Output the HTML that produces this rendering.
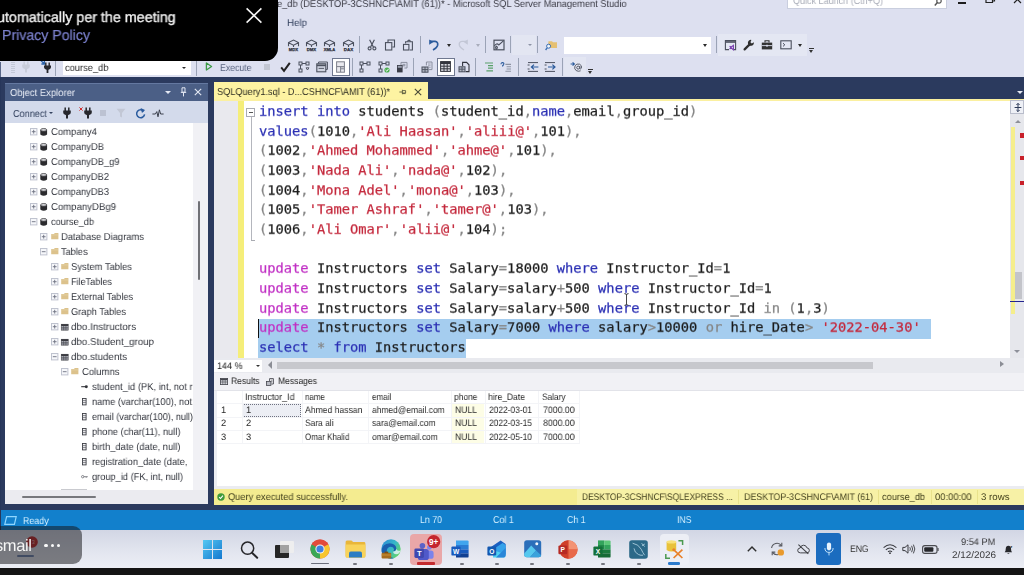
<!DOCTYPE html>
<html>
<head>
<meta charset="utf-8">
<title>SQLQuery1.sql - Microsoft SQL Server Management Studio</title>
<style>
html,body{margin:0;padding:0;}
body{width:1024px;height:575px;overflow:hidden;position:relative;background:#dde0f0;filter:blur(0.45px);font-family:"Liberation Sans",sans-serif;font-size:10px;color:#222;}
.abs{position:absolute;}
.t{position:absolute;white-space:pre;line-height:1.15;transform-origin:0 50%;z-index:5;text-rendering:geometricPrecision;will-change:transform;}
svg{position:absolute;overflow:visible;}
#chrome{left:0;top:0;width:1024px;height:77px;background:#dde0f0;}
#navy{left:0;top:77px;width:1024px;height:433px;background:#2b3a5e;}
#oe{left:5px;top:83px;width:203px;height:421px;background:#fff;}
#oetrack{left:193px;top:123px;width:15px;height:367px;background:#f1f1f5;}
#oehs{left:5px;top:490px;width:203px;height:14px;background:#ebebf0;}
#oehead{left:5px;top:83px;width:203px;height:18px;background:#4b5f86;border-top:1px solid #6478a0;box-sizing:border-box;}
#oetool{left:5px;top:101px;width:203px;height:22px;background:#d3daeb;}
#edtab{left:214px;top:82px;width:214px;height:19px;background:#fdf3a2;}
#editor{left:214px;top:100px;width:810px;height:258px;background:#fff;}
#gutter{left:214px;top:100px;width:24.4px;height:258px;background:#e9e9ee;}
#ybar{left:238.4px;top:100px;width:5.4px;height:258px;background:#f5ee7a;}
.cl{will-change:transform;transform:scaleY(0.94);transform-origin:0 50%;position:absolute;left:258.5px;white-space:pre;font-family:"DejaVu Sans Mono","Liberation Mono",monospace;font-size:13.74px;letter-spacing:0px;line-height:20px;height:20px;color:#1c1c1c;z-index:5;-webkit-text-stroke:0.25px;}
.kw{color:#2b30b4;}
.str{color:#c4283c;}
.gr{color:#858585;}
.mg{color:#c030c4;}
.sel{position:absolute;background:#a5cdef;}
#zoombar{left:214px;top:358px;width:810px;height:15px;background:#e9eaef;}
#restabs{left:214px;top:373px;width:810px;height:17px;background:#f1f1f5;}
#grid{left:214px;top:390px;width:810px;height:95.5px;background:#fff;}
#gridgap{left:214px;top:485.5px;width:810px;height:3.5px;background:#ebecf1;}
#qstat{left:214px;top:489px;width:810px;height:15.7px;background:#f7f1a6;}
#qstatl{left:214px;top:489px;width:362.5px;height:15.7px;background:#f4ec90;}
#blue{left:0;top:510px;width:1024px;height:20px;background:#1280cc;}
#taskbar{left:0;top:529.8px;width:1024px;height:38.4px;background:linear-gradient(#d2d6e4,#e2e5ef 55%,#eceef5);}
#bottom{left:0;top:568px;width:1024px;height:7px;background:#141414;}
#toast{left:0;top:0;width:278px;height:61px;background:#000;border-radius:0 0 13px 0;z-index:10;}
.sep{position:absolute;width:1px;background:#9aa3b8;}
</style>
</head>
<body>
<div class="abs" id="chrome"></div>
<div class="abs" id="navy"></div>
<!-- OBJECT EXPLORER -->
<div class="abs" id="oe"></div>
<div class="abs" id="oetrack"></div>
<div class="abs" id="oehs"></div>
<div class="abs" id="oehead"></div>
<div class="abs" id="oetool"></div>
<!-- EDITOR -->
<div class="abs" id="edtab"></div>
<div class="abs" id="editor"></div>
<div class="abs" id="gutter"></div>
<div class="abs" id="ybar"></div>
<!-- RESULTS -->
<div class="abs" id="zoombar"></div>
<div class="abs" id="restabs"></div>
<div class="abs" id="grid"></div>
<div class="abs" id="gridgap"></div>
<div class="abs" id="qstat"></div>
<div class="abs" id="qstatl"></div>
<!-- STATUS / TASKBAR -->
<div class="abs" id="blue"></div>
<div class="abs" id="taskbar"></div>
<div class="abs" id="bottom"></div>
<!-- TOAST -->
<div class="abs" id="toast"></div>

<!-- TOP CHROME / TOOLBARS -->
<div class="abs" style="left:0;top:62px;width:1px;height:16px;background:#5a6788"></div>
<div class="abs" style="left:787px;top:0;width:160px;height:9px;background:#fff;border:1px solid #c9cede;border-top:none;box-sizing:border-box"></div>
<svg style="left:934.0px;top:-2.0px" width="8" height="8" viewBox="0 0 8 8"><circle cx="5" cy="3" r="2.2" fill="none" stroke="#555" stroke-width="1.2"/><path d="M3.4 4.6 L0.8 7.4" stroke="#555" stroke-width="1.5"/></svg>
<div class="abs" style="left:958px;top:1.5px;width:8px;height:2px;background:#1d1d1d"></div>
<svg style="left:985.0px;top:-2.0px" width="10" height="8" viewBox="0 0 10 8"><path d="M1 -2 V4.5 H7.5 V-2 M3 -3 H9.5 V3 H7.5" fill="none" stroke="#222" stroke-width="1.2"/></svg>
<svg style="left:1013.5px;top:-2.0px" width="9" height="7" viewBox="0 0 9 7"><path d="M0 -2 L7 5 M7 -2 L3.5 1.5 L0 5" fill="none" stroke="#222" stroke-width="1.2"/></svg>
<svg style="left:245.5px;top:8px;z-index:11" width="16" height="15" viewBox="0 0 16 15"><path d="M0.6 0.4 L15.4 14.6 M15.4 0.4 L0.6 14.6" stroke="#f4f4f4" stroke-width="1.6"/></svg>
<svg style="left:286.5px;top:38.5px" width="13" height="12" viewBox="0 0 13 12"><path d="M1.5 7.2 V3.6 L6.5 1 L11.5 3.6 V7.2 M1.5 3.8 L6.5 6.2 L11.5 3.8 M6.5 6.2 V8" fill="none" stroke="#4b505e" stroke-width="1.1"/><text x="6.5" y="12" font-family="Liberation Sans,sans-serif" font-size="4.3" font-weight="bold" text-anchor="middle" fill="#2e3140" stroke="#2e3140" stroke-width="0.25" textLength="9.4" lengthAdjust="spacingAndGlyphs">MDX</text></svg>
<svg style="left:305.0px;top:38.5px" width="13" height="12" viewBox="0 0 13 12"><path d="M1.5 7.2 V3.6 L6.5 1 L11.5 3.6 V7.2 M1.5 3.8 L6.5 6.2 L11.5 3.8 M6.5 6.2 V8" fill="none" stroke="#4b505e" stroke-width="1.1"/><text x="6.5" y="12" font-family="Liberation Sans,sans-serif" font-size="4.3" font-weight="bold" text-anchor="middle" fill="#2e3140" stroke="#2e3140" stroke-width="0.25" textLength="9.4" lengthAdjust="spacingAndGlyphs">DMX</text></svg>
<svg style="left:323.3px;top:38.5px" width="13" height="12" viewBox="0 0 13 12"><path d="M1.5 7.2 V3.6 L6.5 1 L11.5 3.6 V7.2 M1.5 3.8 L6.5 6.2 L11.5 3.8 M6.5 6.2 V8" fill="none" stroke="#4b505e" stroke-width="1.1"/><text x="6.5" y="12" font-family="Liberation Sans,sans-serif" font-size="4.3" font-weight="bold" text-anchor="middle" fill="#2e3140" stroke="#2e3140" stroke-width="0.25" textLength="11.6" lengthAdjust="spacingAndGlyphs">XMLA</text></svg>
<svg style="left:341.5px;top:38.5px" width="13" height="12" viewBox="0 0 13 12"><path d="M1.5 7.2 V3.6 L6.5 1 L11.5 3.6 V7.2 M1.5 3.8 L6.5 6.2 L11.5 3.8 M6.5 6.2 V8" fill="none" stroke="#4b505e" stroke-width="1.1"/><text x="6.5" y="12" font-family="Liberation Sans,sans-serif" font-size="4.3" font-weight="bold" text-anchor="middle" fill="#2e3140" stroke="#2e3140" stroke-width="0.25" textLength="9.4" lengthAdjust="spacingAndGlyphs">DAX</text></svg>
<div class="sep" style="left:358.5px;top:36.0px;height:17.0px;background:#9ba3b6"></div>
<svg style="left:366.0px;top:38.5px" width="12" height="12" viewBox="0 0 12 12"><path d="M3.6 0.8 L7.4 8 M8.4 0.8 L4.6 8" stroke="#4b505e" stroke-width="1.2" fill="none"/><circle cx="3.6" cy="9.4" r="1.5" fill="none" stroke="#4b505e" stroke-width="1.1"/><circle cx="8.4" cy="9.4" r="1.5" fill="none" stroke="#4b505e" stroke-width="1.1"/></svg>
<svg style="left:384.3px;top:38.5px" width="12" height="12" viewBox="0 0 12 12"><path d="M4 3 V1 H10.5 V8 H8.4" fill="none" stroke="#4b505e" stroke-width="1.1"/><rect x="1.5" y="3.6" width="6.3" height="7.4" fill="none" stroke="#4b505e" stroke-width="1.1"/></svg>
<svg style="left:402.0px;top:38.5px" width="12" height="12" viewBox="0 0 12 12"><path d="M3.6 4.4 V2.8 H10.4 V11 H7.8" fill="none" stroke="#4b505e" stroke-width="1.1"/><path d="M5.4 2.6 Q7 -0.4 8.6 2.6" fill="none" stroke="#4b505e" stroke-width="1.1"/><rect x="1.5" y="5.4" width="5.4" height="5.6" fill="none" stroke="#4b505e" stroke-width="1.1"/></svg>
<div class="sep" style="left:420.1px;top:36.0px;height:17.0px;background:#9ba3b6"></div>
<svg style="left:428.0px;top:38.5px" width="12" height="12" viewBox="0 0 12 12"><path d="M2.2 2.4 H7 Q10.4 2.8 9.6 6.4 Q9 8.8 5 11" fill="none" stroke="#2b5b9c" stroke-width="1.7"/><path d="M1.2 0.6 V5.8 L5.4 3 Z" fill="#2b5b9c"/></svg>
<div class="abs" style="left:446.7px;top:43.5px;border:2.4px solid transparent;border-top:3px solid #2a2a2a;border-bottom:none"></div>
<svg style="left:457.0px;top:38.5px" width="12" height="12" viewBox="0 0 12 12"><path d="M9.8 2.4 H5 Q1.6 2.8 2.4 6.4 Q3 8.8 7 11" fill="none" stroke="#c3c7d6" stroke-width="1.4"/><path d="M10.8 0.6 V5.8 L6.6 3 Z" fill="#c3c7d6"/></svg>
<div class="abs" style="left:475.6px;top:43.5px;border:2.4px solid transparent;border-top:3px solid #a9adbc;border-bottom:none"></div>
<div class="sep" style="left:485.1px;top:36.0px;height:17.0px;background:#9ba3b6"></div>
<svg style="left:493.0px;top:38.5px" width="12" height="12" viewBox="0 0 12 12"><rect x="1" y="1.2" width="10" height="9.6" fill="none" stroke="#4b505e" stroke-width="1.2"/><path d="M1.4 7 Q3.6 3.4 5.8 6 L10.4 1.8 M3.4 10.4 Q1.8 8.4 3.4 7.2 Q5.4 8.2 3.4 10.4" fill="none" stroke="#4b505e" stroke-width="1.1"/></svg>
<div class="sep" style="left:510.2px;top:36.0px;height:17.0px;background:#9ba3b6"></div>
<div class="abs" style="left:512px;top:35px;width:24px;height:20px;background:#e3e6f2"></div>
<div class="abs" style="left:527.6px;top:43.5px;border:2.2px solid transparent;border-top:2.6px solid #8d93a6;border-bottom:none"></div>
<div class="sep" style="left:537.0px;top:36.0px;height:17.0px;background:#9ba3b6"></div>
<svg style="left:544.5px;top:38.5px" width="13" height="12" viewBox="0 0 13 12"><path d="M3.4 2.2 H7 L8 3.2 H12 V9 H3.4 Z" fill="#e5c073"/><circle cx="3.6" cy="7.2" r="2" fill="#eef3fb" stroke="#3a6fb4" stroke-width="1"/><path d="M2.2 8.8 L0.6 11" stroke="#3a6fb4" stroke-width="1.3"/></svg>
<div class="abs" style="left:564px;top:37px;width:147px;height:17px;background:#fff"></div>
<div class="abs" style="left:703px;top:44px;border:2.4px solid transparent;border-top:3px solid #2a2a2a;border-bottom:none"></div>
<div class="sep" style="left:715.5px;top:36.0px;height:17.0px;background:#9ba3b6"></div>
<div class="abs" style="left:718px;top:33.5px;width:89px;height:22px;background:#e4e7f3"></div>
<svg style="left:723.5px;top:38.5px" width="13" height="12" viewBox="0 0 13 12"><path d="M5 10.6 H1.4 V1.6 H11.6 V10.6 H10" fill="none" stroke="#4b505e" stroke-width="1.1"/><path d="M1.4 3 H11.6" stroke="#4b505e" stroke-width="1.6"/><path d="M5.6 7.2 L7.2 8.6 L5.6 10 M9.4 6.4 V10.8 L6.6 8.6 Z" fill="none" stroke="#7a3fb0" stroke-width="1.1"/></svg>
<svg style="left:742.5px;top:38.5px" width="12" height="12" viewBox="0 0 12 12"><path d="M1.6 10.4 L6.4 5.6" stroke="#2e2e2e" stroke-width="2.2" stroke-linecap="round"/><path d="M10.8 3.2 A3 3 0 1 1 8.4 0.9 L7.4 3.2 L8.8 4.4 Z" fill="#2e2e2e"/></svg>
<svg style="left:761.0px;top:38.5px" width="12" height="12" viewBox="0 0 12 12"><rect x="0.8" y="3.6" width="10.4" height="6.8" fill="#333"/><path d="M4 3.4 V1.8 H8 V3.4" fill="none" stroke="#333" stroke-width="1.1"/><path d="M0.8 6.6 H11.2" stroke="#dde0f0" stroke-width="0.9"/><rect x="5.2" y="5.8" width="1.6" height="1.8" fill="#dde0f0"/></svg>
<svg style="left:780.0px;top:39.5px" width="12" height="10" viewBox="0 0 12 10"><rect x="0.8" y="0.8" width="10.4" height="8" fill="none" stroke="#4b505e" stroke-width="1.1"/><path d="M3 3.2 L4.8 4.8 L3 6.4" fill="none" stroke="#4b505e" stroke-width="1"/></svg>
<div class="abs" style="left:797.6px;top:43.5px;border:2.4px solid transparent;border-top:3px solid #2a2a2a;border-bottom:none"></div>
<div class="abs" style="left:809px;top:48px;width:5px;height:1px;background:#333"></div>
<div class="abs" style="left:809px;top:50px;border:2.5px solid transparent;border-top:3px solid #333;border-bottom:none"></div>
<div class="abs" style="left:11px;top:61px;width:4px;height:13px;background:repeating-linear-gradient(#dde0f0 0 1px,#c4c9d8 1px 2px)"></div>
<svg style="left:21.0px;top:60.5px" width="10" height="12" viewBox="0 0 10 12"><path d="M3.2 0.4 V4 M6.8 0.4 V4" stroke="#c9cdda" stroke-width="1.5"/><path d="M1.2 3.4 H8.8 V5.4 Q8.8 7.2 6.8 7.8 L6 8.2 V11.6 H4 V8.2 L3.2 7.8 Q1.2 7.2 1.2 5.4 Z" fill="#c9cdda"/></svg>
<svg style="left:39.5px;top:60.0px" width="12" height="13" viewBox="0 0 12 13"><path d="M5.8 2.6 V6 M9.2 2.6 V6" stroke="#26272c" stroke-width="1.4"/><path d="M4 5.4 H11 V7.2 Q11 8.8 9.2 9.4 L8.4 9.8 V13 H6.6 V9.8 L5.8 9.4 Q4 8.8 4 7.2 Z" fill="#26272c"/><path d="M0.6 0.4 L4.2 3.8 M4.4 0.8 V4 H1.4" fill="none" stroke="#2b62a8" stroke-width="1.3"/></svg>
<div class="sep" style="left:55.2px;top:60.0px;height:16.0px;background:#9ba3b6"></div>
<div class="abs" style="left:63px;top:61px;width:127.5px;height:13.5px;background:#fff"></div>
<div class="abs" style="left:182.4px;top:66.5px;border:2.2px solid transparent;border-top:2.8px solid #2a2a2a;border-bottom:none"></div>
<div class="sep" style="left:195.7px;top:60.0px;height:16.0px;background:#9ba3b6"></div>
<svg style="left:204.8px;top:62.3px" width="8" height="9" viewBox="0 0 8 9"><path d="M1.4 1 L6.6 4.5 L1.4 8 Z" fill="none" stroke="#3d9a46" stroke-width="1.3" stroke-linejoin="round"/></svg>
<div class="abs" style="left:264.4px;top:63.8px;width:6px;height:6px;background:#c2c6d2"></div>
<svg style="left:279.8px;top:62.3px" width="11" height="10" viewBox="0 0 11 10"><path d="M1.2 5.4 L4 8.8 L9.8 0.8" fill="none" stroke="#222" stroke-width="2"/></svg>
<svg style="left:297.8px;top:60.5px" width="12" height="12" viewBox="0 0 12 12"><rect x="1" y="1" width="3" height="3" fill="none" stroke="#4b505e" stroke-width="1"/><rect x="1" y="8" width="3" height="3" fill="none" stroke="#4b505e" stroke-width="1"/><rect x="8" y="1" width="3" height="3" fill="none" stroke="#4b505e" stroke-width="1"/><path d="M2.5 4 V8 M4 2.5 H8" stroke="#4b505e" stroke-width="1"/><path d="M8 6.8 H11 L9.5 9 Z" fill="none" stroke="#4b505e" stroke-width="0.9"/></svg>
<svg style="left:316.0px;top:60.5px" width="12" height="12" viewBox="0 0 12 12"><path d="M2.6 2.6 V1 H11.4 V8.4 H9.8" fill="none" stroke="#4b505e" stroke-width="1"/><rect x="0.8" y="2.8" width="9" height="8" fill="#cfd3e0" stroke="#4b505e" stroke-width="1.1"/><path d="M0.8 4.4 H9.8" stroke="#4b505e" stroke-width="1.6"/><path d="M2.6 7.4 H8" stroke="#4b505e" stroke-width="0.9"/></svg>
<div class="abs" style="left:331.5px;top:57.5px;width:18px;height:18px;background:#fff;border:1px solid #6f7890;box-sizing:border-box"></div>
<svg style="left:336.0px;top:60.5px" width="9" height="12" viewBox="0 0 9 12"><rect x="0.6" y="0.8" width="7.8" height="10.4" fill="#e9e9ee" stroke="#7c7f8a" stroke-width="1"/><path d="M0.6 5.6 H8.4 M4.6 5.6 V11" stroke="#7c7f8a" stroke-width="1"/><rect x="5" y="6.6" width="3" height="1.8" fill="#9a9da8"/></svg>
<div class="sep" style="left:351.8px;top:58.0px;height:18.0px;background:#9ba3b6"></div>
<svg style="left:359.4px;top:60.5px" width="12" height="12" viewBox="0 0 12 12"><rect x="1" y="1" width="3" height="3" fill="none" stroke="#4b505e" stroke-width="1"/><rect x="1" y="8" width="3" height="3" fill="none" stroke="#4b505e" stroke-width="1"/><rect x="8" y="1" width="3" height="3" fill="none" stroke="#4b505e" stroke-width="1"/><path d="M2.5 4 V8 M4 2.5 H8" stroke="#4b505e" stroke-width="1"/></svg>
<svg style="left:377.5px;top:60.5px" width="12" height="12" viewBox="0 0 12 12"><rect x="1" y="1" width="3" height="3" fill="none" stroke="#4b505e" stroke-width="1"/><rect x="1" y="8" width="3" height="3" fill="none" stroke="#4b505e" stroke-width="1"/><rect x="8" y="1" width="3" height="3" fill="none" stroke="#4b505e" stroke-width="1"/><path d="M2.5 4 V8 M4 2.5 H8" stroke="#4b505e" stroke-width="1"/><circle cx="9" cy="9" r="2.6" fill="#4caf50"/><path d="M7.6 9 L8.8 10.2 L10.6 7.8" fill="none" stroke="#fff" stroke-width="0.9"/></svg>
<svg style="left:395.5px;top:60.5px" width="12" height="12" viewBox="0 0 12 12"><path d="M5 4 V1.4 H11 V7 H8.4" fill="none" stroke="#8a8f9e" stroke-width="1"/><rect x="6.4" y="2.8" width="3" height="2.6" fill="#9a9fae"/><rect x="1" y="4" width="5.6" height="7.4" fill="#3a3d48"/><rect x="1.8" y="4.8" width="4" height="2" fill="#9a9fae"/></svg>
<div class="sep" style="left:413.0px;top:58.0px;height:18.0px;background:#9ba3b6"></div>
<svg style="left:421.0px;top:60.5px" width="12" height="12" viewBox="0 0 12 12"><path d="M5.4 4.4 V1 H11 V8.6 H7.8" fill="none" stroke="#8a8f9e" stroke-width="1"/><path d="M7 3 H9.6 M7 4.8 H9.6 M8.2 6.6 H9.6" stroke="#8a8f9e" stroke-width="0.8"/><rect x="1" y="6" width="6" height="5.2" fill="#b4b8c6" stroke="#4b505e" stroke-width="1"/><path d="M1 8.6 H7 M4 6 V11.2" stroke="#4b505e" stroke-width="0.9"/></svg>
<div class="abs" style="left:436.5px;top:57.5px;width:18px;height:18px;background:#fff;border:1px solid #6f7890;box-sizing:border-box"></div>
<svg style="left:440.0px;top:61.0px" width="11" height="11" viewBox="0 0 11 11"><rect x="0.6" y="0.6" width="9.8" height="9.8" fill="#d8d9df" stroke="#33353e" stroke-width="1"/><path d="M0.6 1.8 H10.4" stroke="#33353e" stroke-width="2.4"/><path d="M0.6 5.2 H10.4 M0.6 7.8 H10.4 M4 3 V10.4 M7.2 3 V10.4" stroke="#33353e" stroke-width="1"/></svg>
<svg style="left:458.0px;top:60.5px" width="12" height="12" viewBox="0 0 12 12"><path d="M4.6 5 V1.4 H8.6 L11 3.8 V10.6 H7.6" fill="none" stroke="#33353e" stroke-width="1.1"/><rect x="1" y="5.8" width="6" height="5" fill="#b4b8c6" stroke="#4b505e" stroke-width="1"/><path d="M1 8.2 H7 M4 5.8 V10.8" stroke="#4b505e" stroke-width="0.9"/></svg>
<div class="sep" style="left:475.1px;top:58.0px;height:18.0px;background:#9ba3b6"></div>
<svg style="left:484.0px;top:61.5px" width="10" height="10" viewBox="0 0 10 10"><path d="M1 1 H9 M4 3.6 H9 M4 6.2 H9 M2.4 8.8 H9" stroke="#5aa06a" stroke-width="1.2"/></svg>
<svg style="left:500.0px;top:61.5px" width="12" height="10" viewBox="0 0 12 10"><path d="M1 2.2 Q1.2 0.4 2.8 0.6 Q4.4 1 3.6 2.6 L2.6 3.8 V4.6" fill="none" stroke="#2b5b9c" stroke-width="1.1"/><path d="M5.4 2.4 H11 M6.6 4.8 H11 M6.6 7 H11 M5.4 9.2 H11" stroke="#8d92a2" stroke-width="1.1"/></svg>
<div class="sep" style="left:518.2px;top:58.0px;height:18.0px;background:#9ba3b6"></div>
<svg style="left:526.5px;top:61.5px" width="12" height="10" viewBox="0 0 12 10"><path d="M1 0.6 H11 M1 9.4 H11" stroke="#4b505e" stroke-width="1"/><path d="M0.6 3 H2.6 M0.6 7 H2.6" stroke="#4b505e" stroke-width="1"/><path d="M11.4 5 H4.6 M7 2.6 L4.4 5 L7 7.4" fill="none" stroke="#2b5b9c" stroke-width="1.2"/></svg>
<svg style="left:544.0px;top:61.5px" width="12" height="10" viewBox="0 0 12 10"><path d="M1 0.6 H11 M1 9.4 H11" stroke="#4b505e" stroke-width="1"/><path d="M0.6 3 H2.6 M0.6 7 H2.6" stroke="#4b505e" stroke-width="1"/><path d="M4 5 H10.8 M8.4 2.6 L11 5 L8.4 7.4" fill="none" stroke="#2b5b9c" stroke-width="1.2"/></svg>
<div class="sep" style="left:562.0px;top:58.0px;height:18.0px;background:#9ba3b6"></div>
<div class="abs" style="left:564px;top:57px;width:22px;height:19px;background:#e3e6f2"></div>
<svg style="left:569.5px;top:61.5px" width="13" height="10" viewBox="0 0 13 10"><path d="M0.6 2 H4 M2.6 0.4 L4.4 2 L2.6 3.6" fill="none" stroke="#2b5b9c" stroke-width="1.1"/><circle cx="8.2" cy="5.6" r="1.5" fill="none" stroke="#4b505e" stroke-width="0.9"/><path d="M9.8 4 V6.6 Q10.6 7.4 11.4 6.2 Q12.2 3.4 9.6 2.2 Q6.6 1.2 5 3.8 Q3.8 6.8 6.2 8.6 Q8.4 9.8 10.6 8.8" fill="none" stroke="#4b505e" stroke-width="0.9"/></svg>
<div class="abs" style="left:588px;top:68.5px;width:5px;height:1px;background:#333"></div>
<div class="abs" style="left:588px;top:70.5px;border:2.5px solid transparent;border-top:3px solid #333;border-bottom:none"></div>

<!-- OBJECT EXPLORER DETAILS -->
<div class="abs" style="left:165px;top:90.5px;border:3px solid transparent;border-top:3.4px solid #e3e8f3;border-bottom:none"></div>
<svg style="left:179.9px;top:87.0px" width="7" height="10" viewBox="0 0 7 10"><path d="M2 0.8 H5 V5.2 H2 Z M0.8 5.4 H6.2 M3.5 5.4 V9.4" fill="none" stroke="#e3e8f3" stroke-width="1"/></svg>
<svg style="left:193.6px;top:88.0px" width="8" height="8" viewBox="0 0 8 8"><path d="M0.8 0.8 L7.2 7.2 M7.2 0.8 L0.8 7.2" stroke="#e3e8f3" stroke-width="1.1"/></svg>
<div class="abs" style="left:48.6px;top:112px;border:2.2px solid transparent;border-top:2.8px solid #34425f;border-bottom:none"></div>
<svg style="left:62.0px;top:106.5px" width="10" height="12" viewBox="0 0 10 12"><path d="M3.2 0.4 V4 M6.8 0.4 V4" stroke="#26272c" stroke-width="1.5"/><path d="M1.2 3.4 H8.8 V5.4 Q8.8 7.2 6.8 7.8 L6 8.2 V11.6 H4 V8.2 L3.2 7.8 Q1.2 7.2 1.2 5.4 Z" fill="#26272c"/></svg>
<svg style="left:82.5px;top:106.5px" width="10" height="12" viewBox="0 0 10 12"><path d="M3.2 0.4 V4 M6.8 0.4 V4" stroke="#26272c" stroke-width="1.5"/><path d="M1.2 3.4 H8.8 V5.4 Q8.8 7.2 6.8 7.8 L6 8.2 V11.6 H4 V8.2 L3.2 7.8 Q1.2 7.2 1.2 5.4 Z" fill="#26272c"/></svg>
<svg style="left:79.0px;top:106.5px" width="4" height="4" viewBox="0 0 4 4"><path d="M0.4 0.4 L3.6 3.6 M3.6 0.4 L0.4 3.6" stroke="#d03030" stroke-width="1"/></svg>
<div class="abs" style="left:100px;top:109.5px;width:6px;height:6px;background:#bcc2d2"></div>
<svg style="left:116.0px;top:108.0px" width="10" height="10" viewBox="0 0 10 10"><path d="M0.6 0.8 H9.4 L6 5 V9.6 L4 8.4 V5 Z" fill="#c2c7d5"/></svg>
<svg style="left:134.5px;top:107.5px" width="11" height="11" viewBox="0 0 11 11"><path d="M8.8 3.2 A4 4 0 1 0 9.6 6.4" fill="none" stroke="#2a5b9e" stroke-width="1.5"/><path d="M5.6 0 L10 2 L7 5 Z" fill="#2a5b9e"/></svg>
<svg style="left:152.4px;top:108.5px" width="12" height="9" viewBox="0 0 12 9"><path d="M0.4 5 H3.4 L4.8 2.6 L6 7.8 L7.4 0.8 L8.6 5 H11.6" fill="none" stroke="#3a3f4c" stroke-width="1"/></svg>
<div class="abs" style="left:198.2px;top:201px;width:2.2px;height:78.5px;background:#707176;border-radius:1px"></div>
<div class="abs" style="left:22px;top:495.6px;width:74px;height:2.2px;background:#77787d;border-radius:1px"></div>
<svg style="left:30.2px;top:128.3px" width="7.4" height="7.4" viewBox="0 0 7.4 7.4"><rect x="0.5" y="0.5" width="6.4" height="6.4" fill="#f6f7fa" stroke="#bfc3cf" stroke-width="1"/><path d="M1.8 3.7 H5.6" stroke="#6d7180" stroke-width="0.9"/><path d="M3.7 1.8 V5.6" stroke="#6d7180" stroke-width="0.9"/></svg>
<svg style="left:40.1px;top:128.1px" width="7.4" height="8.2" viewBox="0 0 7.4 8.2"><path d="M0.3 1.9 V6.4 Q3.7 9 7.1 6.4 V1.9 Z" fill="#2b2b2e"/><ellipse cx="3.7" cy="1.9" rx="3.1" ry="1.4" fill="#d4d4d8" stroke="#2b2b2e" stroke-width="0.7"/></svg>
<svg style="left:30.2px;top:143.3px" width="7.4" height="7.4" viewBox="0 0 7.4 7.4"><rect x="0.5" y="0.5" width="6.4" height="6.4" fill="#f6f7fa" stroke="#bfc3cf" stroke-width="1"/><path d="M1.8 3.7 H5.6" stroke="#6d7180" stroke-width="0.9"/><path d="M3.7 1.8 V5.6" stroke="#6d7180" stroke-width="0.9"/></svg>
<svg style="left:40.1px;top:143.1px" width="7.4" height="8.2" viewBox="0 0 7.4 8.2"><path d="M0.3 1.9 V6.4 Q3.7 9 7.1 6.4 V1.9 Z" fill="#2b2b2e"/><ellipse cx="3.7" cy="1.9" rx="3.1" ry="1.4" fill="#d4d4d8" stroke="#2b2b2e" stroke-width="0.7"/></svg>
<svg style="left:30.2px;top:158.3px" width="7.4" height="7.4" viewBox="0 0 7.4 7.4"><rect x="0.5" y="0.5" width="6.4" height="6.4" fill="#f6f7fa" stroke="#bfc3cf" stroke-width="1"/><path d="M1.8 3.7 H5.6" stroke="#6d7180" stroke-width="0.9"/><path d="M3.7 1.8 V5.6" stroke="#6d7180" stroke-width="0.9"/></svg>
<svg style="left:40.1px;top:158.1px" width="7.4" height="8.2" viewBox="0 0 7.4 8.2"><path d="M0.3 1.9 V6.4 Q3.7 9 7.1 6.4 V1.9 Z" fill="#2b2b2e"/><ellipse cx="3.7" cy="1.9" rx="3.1" ry="1.4" fill="#d4d4d8" stroke="#2b2b2e" stroke-width="0.7"/></svg>
<svg style="left:30.2px;top:173.3px" width="7.4" height="7.4" viewBox="0 0 7.4 7.4"><rect x="0.5" y="0.5" width="6.4" height="6.4" fill="#f6f7fa" stroke="#bfc3cf" stroke-width="1"/><path d="M1.8 3.7 H5.6" stroke="#6d7180" stroke-width="0.9"/><path d="M3.7 1.8 V5.6" stroke="#6d7180" stroke-width="0.9"/></svg>
<svg style="left:40.1px;top:173.1px" width="7.4" height="8.2" viewBox="0 0 7.4 8.2"><path d="M0.3 1.9 V6.4 Q3.7 9 7.1 6.4 V1.9 Z" fill="#2b2b2e"/><ellipse cx="3.7" cy="1.9" rx="3.1" ry="1.4" fill="#d4d4d8" stroke="#2b2b2e" stroke-width="0.7"/></svg>
<svg style="left:30.2px;top:188.3px" width="7.4" height="7.4" viewBox="0 0 7.4 7.4"><rect x="0.5" y="0.5" width="6.4" height="6.4" fill="#f6f7fa" stroke="#bfc3cf" stroke-width="1"/><path d="M1.8 3.7 H5.6" stroke="#6d7180" stroke-width="0.9"/><path d="M3.7 1.8 V5.6" stroke="#6d7180" stroke-width="0.9"/></svg>
<svg style="left:40.1px;top:188.1px" width="7.4" height="8.2" viewBox="0 0 7.4 8.2"><path d="M0.3 1.9 V6.4 Q3.7 9 7.1 6.4 V1.9 Z" fill="#2b2b2e"/><ellipse cx="3.7" cy="1.9" rx="3.1" ry="1.4" fill="#d4d4d8" stroke="#2b2b2e" stroke-width="0.7"/></svg>
<svg style="left:30.2px;top:203.3px" width="7.4" height="7.4" viewBox="0 0 7.4 7.4"><rect x="0.5" y="0.5" width="6.4" height="6.4" fill="#f6f7fa" stroke="#bfc3cf" stroke-width="1"/><path d="M1.8 3.7 H5.6" stroke="#6d7180" stroke-width="0.9"/><path d="M3.7 1.8 V5.6" stroke="#6d7180" stroke-width="0.9"/></svg>
<svg style="left:40.1px;top:203.1px" width="7.4" height="8.2" viewBox="0 0 7.4 8.2"><path d="M0.3 1.9 V6.4 Q3.7 9 7.1 6.4 V1.9 Z" fill="#2b2b2e"/><ellipse cx="3.7" cy="1.9" rx="3.1" ry="1.4" fill="#d4d4d8" stroke="#2b2b2e" stroke-width="0.7"/></svg>
<svg style="left:30.2px;top:218.3px" width="7.4" height="7.4" viewBox="0 0 7.4 7.4"><rect x="0.5" y="0.5" width="6.4" height="6.4" fill="#f6f7fa" stroke="#bfc3cf" stroke-width="1"/><path d="M1.8 3.7 H5.6" stroke="#6d7180" stroke-width="0.9"/></svg>
<svg style="left:40.1px;top:218.1px" width="7.4" height="8.2" viewBox="0 0 7.4 8.2"><path d="M0.3 1.9 V6.4 Q3.7 9 7.1 6.4 V1.9 Z" fill="#2b2b2e"/><ellipse cx="3.7" cy="1.9" rx="3.1" ry="1.4" fill="#d4d4d8" stroke="#2b2b2e" stroke-width="0.7"/></svg>
<svg style="left:40.4px;top:233.3px" width="7.4" height="7.4" viewBox="0 0 7.4 7.4"><rect x="0.5" y="0.5" width="6.4" height="6.4" fill="#f6f7fa" stroke="#bfc3cf" stroke-width="1"/><path d="M1.8 3.7 H5.6" stroke="#6d7180" stroke-width="0.9"/><path d="M3.7 1.8 V5.6" stroke="#6d7180" stroke-width="0.9"/></svg>
<svg style="left:50.8px;top:233.4px" width="7.6" height="6.4" viewBox="0 0 7.6 6.4"><path d="M0.2 0.9 H3 L3.8 0.1 H7.4 V6.2 H0.2 Z" fill="#dcc28c"/><path d="M0.2 1.9 H7.4" stroke="#e9d7ae" stroke-width="0.6"/></svg>
<svg style="left:40.4px;top:248.3px" width="7.4" height="7.4" viewBox="0 0 7.4 7.4"><rect x="0.5" y="0.5" width="6.4" height="6.4" fill="#f6f7fa" stroke="#bfc3cf" stroke-width="1"/><path d="M1.8 3.7 H5.6" stroke="#6d7180" stroke-width="0.9"/></svg>
<svg style="left:50.8px;top:248.4px" width="7.6" height="6.4" viewBox="0 0 7.6 6.4"><path d="M0.2 0.9 H3 L3.8 0.1 H7.4 V6.2 H0.2 Z" fill="#dcc28c"/><path d="M0.2 1.9 H7.4" stroke="#e9d7ae" stroke-width="0.6"/></svg>
<svg style="left:50.8px;top:263.3px" width="7.4" height="7.4" viewBox="0 0 7.4 7.4"><rect x="0.5" y="0.5" width="6.4" height="6.4" fill="#f6f7fa" stroke="#bfc3cf" stroke-width="1"/><path d="M1.8 3.7 H5.6" stroke="#6d7180" stroke-width="0.9"/><path d="M3.7 1.8 V5.6" stroke="#6d7180" stroke-width="0.9"/></svg>
<svg style="left:61.0px;top:263.4px" width="7.6" height="6.4" viewBox="0 0 7.6 6.4"><path d="M0.2 0.9 H3 L3.8 0.1 H7.4 V6.2 H0.2 Z" fill="#dcc28c"/><path d="M0.2 1.9 H7.4" stroke="#e9d7ae" stroke-width="0.6"/></svg>
<svg style="left:50.8px;top:278.3px" width="7.4" height="7.4" viewBox="0 0 7.4 7.4"><rect x="0.5" y="0.5" width="6.4" height="6.4" fill="#f6f7fa" stroke="#bfc3cf" stroke-width="1"/><path d="M1.8 3.7 H5.6" stroke="#6d7180" stroke-width="0.9"/><path d="M3.7 1.8 V5.6" stroke="#6d7180" stroke-width="0.9"/></svg>
<svg style="left:61.0px;top:278.4px" width="7.6" height="6.4" viewBox="0 0 7.6 6.4"><path d="M0.2 0.9 H3 L3.8 0.1 H7.4 V6.2 H0.2 Z" fill="#dcc28c"/><path d="M0.2 1.9 H7.4" stroke="#e9d7ae" stroke-width="0.6"/></svg>
<svg style="left:50.8px;top:293.3px" width="7.4" height="7.4" viewBox="0 0 7.4 7.4"><rect x="0.5" y="0.5" width="6.4" height="6.4" fill="#f6f7fa" stroke="#bfc3cf" stroke-width="1"/><path d="M1.8 3.7 H5.6" stroke="#6d7180" stroke-width="0.9"/><path d="M3.7 1.8 V5.6" stroke="#6d7180" stroke-width="0.9"/></svg>
<svg style="left:61.0px;top:293.4px" width="7.6" height="6.4" viewBox="0 0 7.6 6.4"><path d="M0.2 0.9 H3 L3.8 0.1 H7.4 V6.2 H0.2 Z" fill="#dcc28c"/><path d="M0.2 1.9 H7.4" stroke="#e9d7ae" stroke-width="0.6"/></svg>
<svg style="left:50.8px;top:308.3px" width="7.4" height="7.4" viewBox="0 0 7.4 7.4"><rect x="0.5" y="0.5" width="6.4" height="6.4" fill="#f6f7fa" stroke="#bfc3cf" stroke-width="1"/><path d="M1.8 3.7 H5.6" stroke="#6d7180" stroke-width="0.9"/><path d="M3.7 1.8 V5.6" stroke="#6d7180" stroke-width="0.9"/></svg>
<svg style="left:61.0px;top:308.4px" width="7.6" height="6.4" viewBox="0 0 7.6 6.4"><path d="M0.2 0.9 H3 L3.8 0.1 H7.4 V6.2 H0.2 Z" fill="#dcc28c"/><path d="M0.2 1.9 H7.4" stroke="#e9d7ae" stroke-width="0.6"/></svg>
<svg style="left:50.8px;top:323.3px" width="7.4" height="7.4" viewBox="0 0 7.4 7.4"><rect x="0.5" y="0.5" width="6.4" height="6.4" fill="#f6f7fa" stroke="#bfc3cf" stroke-width="1"/><path d="M1.8 3.7 H5.6" stroke="#6d7180" stroke-width="0.9"/><path d="M3.7 1.8 V5.6" stroke="#6d7180" stroke-width="0.9"/></svg>
<svg style="left:60.8px;top:323.5px" width="7.4" height="6.4" viewBox="0 0 7.4 6.4"><rect x="0.2" y="0.2" width="7" height="6" fill="#a9abb3"/><rect x="0.2" y="0.2" width="7" height="1.7" fill="#2e2f34"/><path d="M0.2 3.6 H7.2 M0.2 5 H7.2 M2.6 1.9 V6.2 M4.9 1.9 V6.2" stroke="#4a4b52" stroke-width="0.6"/><rect x="0.2" y="0.2" width="7" height="6" fill="none" stroke="#3a3b40" stroke-width="0.5"/></svg>
<svg style="left:50.8px;top:338.3px" width="7.4" height="7.4" viewBox="0 0 7.4 7.4"><rect x="0.5" y="0.5" width="6.4" height="6.4" fill="#f6f7fa" stroke="#bfc3cf" stroke-width="1"/><path d="M1.8 3.7 H5.6" stroke="#6d7180" stroke-width="0.9"/><path d="M3.7 1.8 V5.6" stroke="#6d7180" stroke-width="0.9"/></svg>
<svg style="left:60.8px;top:338.5px" width="7.4" height="6.4" viewBox="0 0 7.4 6.4"><rect x="0.2" y="0.2" width="7" height="6" fill="#a9abb3"/><rect x="0.2" y="0.2" width="7" height="1.7" fill="#2e2f34"/><path d="M0.2 3.6 H7.2 M0.2 5 H7.2 M2.6 1.9 V6.2 M4.9 1.9 V6.2" stroke="#4a4b52" stroke-width="0.6"/><rect x="0.2" y="0.2" width="7" height="6" fill="none" stroke="#3a3b40" stroke-width="0.5"/></svg>
<svg style="left:50.8px;top:353.3px" width="7.4" height="7.4" viewBox="0 0 7.4 7.4"><rect x="0.5" y="0.5" width="6.4" height="6.4" fill="#f6f7fa" stroke="#bfc3cf" stroke-width="1"/><path d="M1.8 3.7 H5.6" stroke="#6d7180" stroke-width="0.9"/></svg>
<svg style="left:60.8px;top:353.5px" width="7.4" height="6.4" viewBox="0 0 7.4 6.4"><rect x="0.2" y="0.2" width="7" height="6" fill="#a9abb3"/><rect x="0.2" y="0.2" width="7" height="1.7" fill="#2e2f34"/><path d="M0.2 3.6 H7.2 M0.2 5 H7.2 M2.6 1.9 V6.2 M4.9 1.9 V6.2" stroke="#4a4b52" stroke-width="0.6"/><rect x="0.2" y="0.2" width="7" height="6" fill="none" stroke="#3a3b40" stroke-width="0.5"/></svg>
<svg style="left:60.9px;top:368.3px" width="7.4" height="7.4" viewBox="0 0 7.4 7.4"><rect x="0.5" y="0.5" width="6.4" height="6.4" fill="#f6f7fa" stroke="#bfc3cf" stroke-width="1"/><path d="M1.8 3.7 H5.6" stroke="#6d7180" stroke-width="0.9"/></svg>
<svg style="left:71.1px;top:368.4px" width="7.6" height="6.4" viewBox="0 0 7.6 6.4"><path d="M0.2 0.9 H3 L3.8 0.1 H7.4 V6.2 H0.2 Z" fill="#dcc28c"/><path d="M0.2 1.9 H7.4" stroke="#e9d7ae" stroke-width="0.6"/></svg>
<svg style="left:81.4px;top:385.1px" width="7" height="3.4" viewBox="0 0 7 3.4"><circle cx="5.3" cy="1.7" r="1.5" fill="#33343a"/><path d="M0.2 1.7 H4.4" stroke="#33343a" stroke-width="1.1"/></svg>
<svg style="left:82.3px;top:398.3px" width="4.6" height="7.4" viewBox="0 0 4.6 7.4"><rect x="0.5" y="0.5" width="3.6" height="6.4" fill="#f0f0f3" stroke="#3c3d44" stroke-width="0.9"/><path d="M0.5 2.6 H4.1 M0.5 4.6 H4.1" stroke="#55565e" stroke-width="0.7"/></svg>
<svg style="left:82.3px;top:413.3px" width="4.6" height="7.4" viewBox="0 0 4.6 7.4"><rect x="0.5" y="0.5" width="3.6" height="6.4" fill="#f0f0f3" stroke="#3c3d44" stroke-width="0.9"/><path d="M0.5 2.6 H4.1 M0.5 4.6 H4.1" stroke="#55565e" stroke-width="0.7"/></svg>
<svg style="left:82.3px;top:428.3px" width="4.6" height="7.4" viewBox="0 0 4.6 7.4"><rect x="0.5" y="0.5" width="3.6" height="6.4" fill="#f0f0f3" stroke="#3c3d44" stroke-width="0.9"/><path d="M0.5 2.6 H4.1 M0.5 4.6 H4.1" stroke="#55565e" stroke-width="0.7"/></svg>
<svg style="left:82.3px;top:443.3px" width="4.6" height="7.4" viewBox="0 0 4.6 7.4"><rect x="0.5" y="0.5" width="3.6" height="6.4" fill="#f0f0f3" stroke="#3c3d44" stroke-width="0.9"/><path d="M0.5 2.6 H4.1 M0.5 4.6 H4.1" stroke="#55565e" stroke-width="0.7"/></svg>
<svg style="left:82.3px;top:458.3px" width="4.6" height="7.4" viewBox="0 0 4.6 7.4"><rect x="0.5" y="0.5" width="3.6" height="6.4" fill="#f0f0f3" stroke="#3c3d44" stroke-width="0.9"/><path d="M0.5 2.6 H4.1 M0.5 4.6 H4.1" stroke="#55565e" stroke-width="0.7"/></svg>
<svg style="left:81.1px;top:475.3px" width="7" height="3.4" viewBox="0 0 7 3.4"><circle cx="1.7" cy="1.7" r="1.2" fill="none" stroke="#6a6b72" stroke-width="0.8"/><path d="M2.8 1.7 H6.8 M5.2 1.7 V2.8" stroke="#6a6b72" stroke-width="0.8"/></svg>
<div class="abs" style="left:61px;top:488.6px;width:26px;height:1.4px;background:#c9cacf"></div>

<!-- CODE -->
<div class="sel" style="left:258px;top:318.5px;width:673px;height:20px;"></div>
<div class="sel" style="left:258px;top:338px;width:208px;height:19.5px;"></div>
<div class="cl" style="top:101.1px"><span class="kw">insert</span> <span class="kw">into</span> students <span class="gr">(</span>student_id<span class="gr">,</span><span class="kw">name</span><span class="gr">,</span>email<span class="gr">,</span>group_id<span class="gr">)</span></div>
<div class="cl" style="top:120.8px"><span class="kw">values</span><span class="gr">(</span>1010<span class="gr">,</span><span class="str">'Ali Haasan'</span><span class="gr">,</span><span class="str">'aliii@'</span><span class="gr">,</span>101<span class="gr">),</span></div>
<div class="cl" style="top:140.4px"><span class="gr">(</span>1002<span class="gr">,</span><span class="str">'Ahmed Mohammed'</span><span class="gr">,</span><span class="str">'ahme@'</span><span class="gr">,</span>101<span class="gr">),</span></div>
<div class="cl" style="top:160.1px"><span class="gr">(</span>1003<span class="gr">,</span><span class="str">'Nada Ali'</span><span class="gr">,</span><span class="str">'nada@'</span><span class="gr">,</span>102<span class="gr">),</span></div>
<div class="cl" style="top:179.7px"><span class="gr">(</span>1004<span class="gr">,</span><span class="str">'Mona Adel'</span><span class="gr">,</span><span class="str">'mona@'</span><span class="gr">,</span>103<span class="gr">),</span></div>
<div class="cl" style="top:199.4px"><span class="gr">(</span>1005<span class="gr">,</span><span class="str">'Tamer Ashraf'</span><span class="gr">,</span><span class="str">'tamer@'</span><span class="gr">,</span>103<span class="gr">),</span></div>
<div class="cl" style="top:219.1px"><span class="gr">(</span>1006<span class="gr">,</span><span class="str">'Ali Omar'</span><span class="gr">,</span><span class="str">'alii@'</span><span class="gr">,</span>104<span class="gr">);</span></div>
<div class="cl" style="top:258.4px"><span class="mg">update</span> Instructors <span class="kw">set</span> Salary<span class="gr">=</span>18000 <span class="kw">where</span> Instructor_Id<span class="gr">=</span>1</div>
<div class="cl" style="top:278.0px"><span class="mg">update</span> Instructors <span class="kw">set</span> Salary<span class="gr">=</span>salary<span class="gr">+</span>500 <span class="kw">where</span> Instructor_Id<span class="gr">=</span>1</div>
<div class="cl" style="top:297.7px"><span class="mg">update</span> Instructors <span class="kw">set</span> Salary<span class="gr">=</span>salary<span class="gr">+</span>500 <span class="kw">where</span> Instructor_Id <span class="gr">in</span> <span class="gr">(</span>1<span class="gr">,</span>3<span class="gr">)</span></div>
<div class="cl" style="top:317.4px"><span class="mg">update</span> Instructors <span class="kw">set</span> Salary<span class="gr">=</span>7000 <span class="kw">where</span> salary<span class="gr">&gt;</span>10000 <span class="gr">or</span> hire_Date<span class="gr">&gt;</span> <span class="str">'2022-04-30'</span></div>
<div class="cl" style="top:337.0px"><span class="kw">select</span> <span class="gr">*</span> <span class="kw">from</span> Instructors</div>

<!-- EDITOR MISC -->
<div class="abs" style="left:214px;top:99px;width:810px;height:1.5px;background:#fbf0a0"></div>
<svg style="left:398.5px;top:88.5px;" width="8" height="6" viewBox="0 0 8 6"><path d="M3.4 0.8 V5.2 M3.4 1.6 H6.6 V4 H3.4 M6.6 4.6 H3.4 M0.4 3 H3.4" fill="none" stroke="#5a5a40" stroke-width="0.9"/></svg>
<svg style="left:414.0px;top:87.5px;" width="8" height="8" viewBox="0 0 8 8"><path d="M0.8 0.8 L7.2 7.2 M7.2 0.8 L0.8 7.2" stroke="#4a4a38" stroke-width="1.1"/></svg>
<div class="abs" style="left:1017px;top:90.5px;border:3px solid transparent;border-top:3.4px solid #e6eaf4;border-bottom:none"></div>
<div class="abs" style="left:250.6px;top:117px;width:1px;height:123px;background:#b4b6bd"></div>
<div class="abs" style="left:250.6px;top:239.5px;width:4px;height:1px;background:#a9abb2"></div>
<div class="abs" style="left:246.4px;top:108px;width:9px;height:9px;background:#fff;border:1px solid #a9abb3;box-sizing:border-box"></div>
<div class="abs" style="left:248.6px;top:112px;width:4.6px;height:1px;background:#555"></div>
<div class="abs" style="left:258.2px;top:319px;width:1.2px;height:19px;background:#111;z-index:6"></div>
<svg style="left:624.0px;top:292.5px;z-index:7" width="5" height="13" viewBox="0 0 5 13"><path d="M0.4 0.6 Q2.5 0.6 2.5 2 V11 Q2.5 12.4 0.4 12.4 M4.6 0.6 Q2.5 0.6 2.5 2 M2.5 11 Q2.5 12.4 4.6 12.4" fill="none" stroke="#333" stroke-width="0.9"/></svg>
<div class="abs" style="left:1010px;top:100px;width:14px;height:258px;background:#e6e7ec"></div>
<div class="abs" style="left:1010px;top:100px;width:14px;height:14px;background:#eef0f6;border:1px solid #b9bdcb;box-sizing:border-box"></div>
<svg style="left:1013.5px;top:103.0px;" width="8" height="9" viewBox="0 0 8 9"><path d="M0.6 4.5 H7.4 M4 0.4 V8.6 M2.4 2 L4 0.4 L5.6 2 M2.4 7 L4 8.6 L5.6 7" fill="none" stroke="#2c3a58" stroke-width="1"/></svg>
<div class="abs" style="left:1014.5px;top:119.5px;border:3px solid transparent;border-bottom:3.4px solid #8d9099;border-top:none"></div>
<div class="abs" style="left:1010.6px;top:127px;width:4.8px;height:187px;background:#f5ee8c"></div>
<div class="abs" style="left:1020px;top:133.2px;width:4px;height:4.6px;background:#c8202a"></div>
<div class="abs" style="left:1020px;top:155.7px;width:4px;height:4.6px;background:#c8202a"></div>
<div class="abs" style="left:1020px;top:180.7px;width:4px;height:4.6px;background:#c8202a"></div>
<div class="abs" style="left:1015.2px;top:271.5px;width:6.6px;height:27px;background:#c3c4ca"></div>
<div class="abs" style="left:1010px;top:300.5px;width:14px;height:1.4px;background:#23238e"></div>
<div class="abs" style="left:1014px;top:349.5px;border:3px solid transparent;border-top:3.4px solid #8d9099;border-bottom:none"></div>

<!-- RESULTS PANE -->
<div class="abs" style="left:214px;top:359.5px;width:48px;height:12px;background:#fff"></div>
<div class="abs" style="left:256.4px;top:364.6px;border:2.2px solid transparent;border-top:2.6px solid #333;border-bottom:none"></div>
<div class="abs" style="left:267.8px;top:361px;border:4.4px solid transparent;border-right:4.6px solid #8b8d95;border-left:none"></div>
<div class="abs" style="left:277px;top:361.8px;width:596px;height:7.4px;background:#c7c8cd"></div>
<div class="abs" style="left:1000px;top:361.4px;border:3.6px solid transparent;border-left:4px solid #8b8d95;border-right:none"></div>
<svg style="left:219.5px;top:378.0px;" width="8" height="7" viewBox="0 0 8 7"><rect x="0.4" y="0.4" width="7.2" height="6.2" fill="#d4d5db" stroke="#45464e" stroke-width="0.8"/><path d="M0.4 1.4 H7.6" stroke="#45464e" stroke-width="1.6"/><path d="M0.4 4 H7.6 M2.8 2 V6.6 M5.2 2 V6.6" stroke="#45464e" stroke-width="0.6"/></svg>
<svg style="left:266.4px;top:377.5px;" width="8" height="8" viewBox="0 0 8 8"><path d="M3.6 3 V0.6 H7.4 V6 H5.4" fill="none" stroke="#45464e" stroke-width="0.9"/><rect x="0.5" y="3.4" width="4.4" height="4" fill="#b9bbc3" stroke="#45464e" stroke-width="0.8"/><path d="M5 2.2 H6.4 M5 3.8 H6.4" stroke="#45464e" stroke-width="0.6"/></svg>
<div class="abs" style="left:214px;top:389.6px;width:810px;height:1px;background:#e2e3e9"></div>
<div class="abs" style="left:214px;top:390.6px;width:3.4px;height:95px;background:#eceef3"></div>
<div class="abs" style="left:451px;top:403.6px;width:33.4px;height:40px;background:#fdfde6"></div>
<div class="abs" style="left:242px;top:403.6px;width:59.4px;height:13.6px;background:#eceef4;border:1px dotted #6f7280;box-sizing:border-box"></div>
<div class="abs" style="left:241.7px;top:391px;width:1px;height:52.6px;background:#f3f4f7"></div>
<div class="abs" style="left:301.8px;top:391px;width:1px;height:52.6px;background:#f3f4f7"></div>
<div class="abs" style="left:368.0px;top:391px;width:1px;height:52.6px;background:#f3f4f7"></div>
<div class="abs" style="left:450.8px;top:391px;width:1px;height:52.6px;background:#f3f4f7"></div>
<div class="abs" style="left:484.6px;top:391px;width:1px;height:52.6px;background:#f3f4f7"></div>
<div class="abs" style="left:538.0px;top:391px;width:1px;height:52.6px;background:#f3f4f7"></div>
<div class="abs" style="left:578.6px;top:391px;width:1px;height:52.6px;background:#f3f4f7"></div>
<div class="abs" style="left:217.4px;top:403.4px;width:361.6px;height:1px;background:#f3f4f7"></div>
<div class="abs" style="left:217.4px;top:417.0px;width:361.6px;height:1px;background:#f3f4f7"></div>
<div class="abs" style="left:217.4px;top:430.2px;width:361.6px;height:1px;background:#f3f4f7"></div>
<div class="abs" style="left:217.4px;top:443.4px;width:361.6px;height:1px;background:#f3f4f7"></div>
<div class="abs" style="left:737.5px;top:490px;width:1px;height:14px;background:#e9e28c"></div>
<div class="abs" style="left:877.5px;top:490px;width:1px;height:14px;background:#e9e28c"></div>
<div class="abs" style="left:930.5px;top:490px;width:1px;height:14px;background:#e9e28c"></div>
<div class="abs" style="left:976.5px;top:490px;width:1px;height:14px;background:#e9e28c"></div>
<svg style="left:216.8px;top:492.6px;" width="8" height="8" viewBox="0 0 8 8"><circle cx="4" cy="4" r="3.7" fill="#3f9a3a"/><path d="M2.2 4.1 L3.5 5.5 L5.9 2.6" fill="none" stroke="#fff" stroke-width="1.1"/></svg>

<!-- STATUS BAR + TASKBAR -->
<div class="abs" style="left:0;top:77px;width:1px;height:453px;background:#27365a"></div>
<svg style="left:3.7px;top:516.1px;" width="13" height="9" viewBox="0 0 13 9"><path d="M2.6 0.7 H12.2 L10.4 8.3 H0.8 Z" fill="none" stroke="#8fd6ff" stroke-width="1.2"/></svg>
<svg style="left:202.9px;top:540.0px;" width="19" height="19" viewBox="0 0 19 19"><defs><linearGradient id="wl" x1="0" y1="0" x2="1" y2="1"><stop offset="0" stop-color="#55c8f2"/><stop offset="1" stop-color="#1478cf"/></linearGradient></defs><path d="M0 0 H9 V9 H0 Z M10 0 H19 V9 H10 Z M0 10 H9 V19 H0 Z M10 10 H19 V19 H10 Z" fill="url(#wl)"/></svg>
<svg style="left:240.0px;top:540.0px;" width="20" height="20" viewBox="0 0 20 20"><circle cx="7.6" cy="8.2" r="6.1" fill="none" stroke="#26262a" stroke-width="1.5"/><path d="M12 12.8 L17.2 17.8" stroke="#26262a" stroke-width="2" stroke-linecap="round"/></svg>
<div class="abs" style="left:279.6px;top:540.5px;width:14px;height:12.5px;background:#eeeeef;border-radius:1px"></div>
<div class="abs" style="left:275px;top:545.2px;width:14.4px;height:12.5px;background:#262626;border-radius:1px"></div>
<div class="abs" style="left:279.6px;top:545.2px;width:9.8px;height:7.8px;background:#a2a2a2"></div>
<svg style="left:310.2px;top:539.0px;" width="20" height="20" viewBox="0 0 20 20"><circle cx="10" cy="10" r="9.6" fill="#e24a3b"/><path d="M10 10 L1.7 5.2 A9.6 9.6 0 0 0 10 19.6 L14.8 11.4 Z" fill="#3aa757"/><path d="M10 10 L10 19.6 A9.6 9.6 0 0 0 18.3 5.2 H10 Z" fill="#f7c52e"/><path d="M10 10 L18.3 5.2 A9.6 9.6 0 0 0 1.7 5.2 Z" fill="#e24a3b"/><circle cx="10" cy="10" r="4.6" fill="#f2f2f2"/><circle cx="10" cy="10" r="3.6" fill="#3f7fe0"/></svg>
<div class="abs" style="left:310.8px;top:562.8px;width:18px;height:1.6px;background:#6b6f7c;border-radius:1px"></div>
<svg style="left:345.1px;top:540.3px;" width="21" height="18" viewBox="0 0 21 18"><path d="M0.6 2 Q0.6 0.4 2 0.4 H6.4 L8.2 2 H19 Q20.4 2 20.4 3.4 V16 Q20.4 17.6 19 17.6 H2 Q0.6 17.6 0.6 16 Z" fill="#e9b63a"/><path d="M0.6 4.4 H20.4 V16 Q20.4 17.6 19 17.6 H2 Q0.6 17.6 0.6 16 Z" fill="#f8d35a"/><path d="M4 17.6 V13.4 Q4 11.6 5.8 11.6 H15.2 Q17 11.6 17 13.4 V17.6 Z" fill="#2b7dc4"/></svg>
<div class="abs" style="left:353.0px;top:562.8px;width:4.4px;height:1.8px;background:#74767e;border-radius:1px"></div>
<svg style="left:380.7px;top:539.0px;" width="20" height="20" viewBox="0 0 20 20"><defs><linearGradient id="eg" x1="0" y1="0" x2="1" y2="0.6"><stop offset="0" stop-color="#2a86d8"/><stop offset="0.6" stop-color="#37b8c8"/><stop offset="1" stop-color="#62d468"/></linearGradient></defs><circle cx="10" cy="10" r="9.7" fill="url(#eg)"/><path d="M0.6 12 Q1 4.6 8.6 4.2 Q14.8 4.4 15.4 9.4 Q15.2 12.2 12.2 12.4 Q14 10.6 12.2 8.6 Q9.4 6.6 6.8 9 Q4.6 12 7 16 Q9 18.8 13 19.2 Q5.6 21 1.6 15 Q0.6 13.4 0.6 12 Z" fill="#1a5fae"/><path d="M12.2 12.4 Q15.2 12.2 15.4 9.4 Q15.6 12.6 19.6 11.4 Q18.6 15 15.4 15.2 Q12 15 12.2 12.4" fill="#dff3f6" opacity="0.85"/><rect x="0.6" y="13.8" width="9.6" height="5.8" rx="1" fill="#a56c1f"/><rect x="3.6" y="12.6" width="3.6" height="1.6" fill="#7a4c12"/><path d="M0.6 16 H10.2" stroke="#d39a3a" stroke-width="0.8"/></svg>
<div class="abs" style="left:388.5px;top:562.8px;width:4.4px;height:1.8px;background:#74767e;border-radius:1px"></div>
<div class="abs" style="left:410px;top:533.5px;width:32px;height:31.4px;background:#e9a7a8;border-radius:4px"></div>
<svg style="left:414.4px;top:542.7px;" width="20" height="17" viewBox="0 0 20 17"><circle cx="15.4" cy="4.4" r="2.4" fill="#7b83eb"/><rect x="12" y="7.4" width="7.6" height="8.4" rx="2.6" fill="#7b83eb"/><circle cx="8.4" cy="2.8" r="2.8" fill="#5b62c9"/><rect x="3.8" y="6" width="11" height="11" rx="2.6" fill="#5059c9"/><rect x="0.4" y="5.4" width="9.6" height="9.6" rx="1.4" fill="#4048b0"/><text x="5.2" y="13" font-family="Liberation Sans,sans-serif" font-weight="bold" font-size="7.6" text-anchor="middle" fill="#fff">T</text></svg>
<svg style="left:427.1px;top:535.3px;" width="13.4" height="13.4" viewBox="0 0 13.4 13.4"><circle cx="6.7" cy="6.7" r="6.6" fill="#c4262e"/><text x="6.7" y="9.6" font-family="Liberation Sans,sans-serif" font-weight="bold" font-size="8.2" text-anchor="middle" fill="#fff">9+</text></svg>
<div class="abs" style="left:417px;top:562.4px;width:18px;height:2.4px;background:#c22a2e;border-radius:1px"></div>
<svg style="left:451.2px;top:540.3px;" width="18" height="18" viewBox="0 0 18 18"><path d="M5 0.4 H16.4 Q17.6 0.4 17.6 1.6 V5 H5 Z" fill="#41a5ee"/><rect x="5" y="5" width="12.6" height="4.4" fill="#2b7cd3"/><rect x="5" y="9.4" width="12.6" height="4.2" fill="#185abd"/><path d="M5 13.6 H17.6 V16.4 Q17.6 17.6 16.4 17.6 H5 Z" fill="#103f91"/><rect x="0.4" y="6.4" width="9.2" height="9.2" rx="1.2" fill="#185abd"/><text x="5" y="13.6" font-family="Liberation Sans,sans-serif" font-weight="bold" font-size="6.6" text-anchor="middle" fill="#fff">W</text></svg>
<div class="abs" style="left:459.6px;top:562.8px;width:4.4px;height:1.8px;background:#74767e;border-radius:1px"></div>
<svg style="left:486.8px;top:540.3px;" width="19" height="18" viewBox="0 0 19 18"><path d="M4 7 L13.6 0.6 L18.6 4 V14 Q18.6 15.6 17 15.6 H6 Z" fill="#1a5fc0"/><path d="M7.4 8.4 L15.6 3 L18.6 5 V14.6 L8 15.6 Z" fill="#35a2ea"/><path d="M6 10 L18.6 14.4 Q18.6 17.6 16 17.6 H6 Z" fill="#50d0f0"/><path d="M18.6 8 L9 17.6 H16.6 Q18.6 17.6 18.6 15.6 Z" fill="#2a86d8"/><rect x="0.4" y="6.6" width="8.8" height="8.8" rx="1.2" fill="#1358b0"/><text x="4.8" y="13.6" font-family="Liberation Sans,sans-serif" font-weight="bold" font-size="6.6" text-anchor="middle" fill="#fff">O</text></svg>
<div class="abs" style="left:494.8px;top:562.8px;width:4.4px;height:1.8px;background:#74767e;border-radius:1px"></div>
<svg style="left:523.5px;top:540.4px;" width="17.4" height="17.4" viewBox="0 0 17.4 17.4"><rect x="0.2" y="0.2" width="17" height="17" rx="2.6" fill="#2c6fba"/><path d="M0.2 13.4 L7.2 5.6 L12 10.4 L6 17.2 H2.8 Q0.2 17.2 0.2 14.6 Z" fill="#56c8ee"/><path d="M6 17.2 L12 10.4 L17.2 15.2 Q17 17.2 14.6 17.2 Z" fill="#3aa2dc"/><circle cx="12.8" cy="3.8" r="1.5" fill="#f4f8fc"/></svg>
<div class="abs" style="left:529.8px;top:562.8px;width:4.4px;height:1.8px;background:#74767e;border-radius:1px"></div>
<svg style="left:557.7px;top:539.6px;" width="19.4" height="19" viewBox="0 0 19.4 19"><circle cx="10.4" cy="9.5" r="9.2" fill="#e2583a"/><path d="M10.4 0.3 A9.2 9.2 0 0 1 19.6 9.5 H10.4 Z" fill="#f39373"/><path d="M10.4 9.5 H19.6 A9.2 9.2 0 0 1 10.4 18.7 Z" fill="#e8694a"/><path d="M10.4 0.3 V18.7 A9.2 9.2 0 0 1 10.4 0.3 Z" fill="#cf3f2a"/><rect x="0.4" y="5.4" width="8.8" height="8.8" rx="1.2" fill="#b62a24"/><text x="4.8" y="12.4" font-family="Liberation Sans,sans-serif" font-weight="bold" font-size="6.6" text-anchor="middle" fill="#fff">P</text></svg>
<div class="abs" style="left:565.8px;top:562.8px;width:4.4px;height:1.8px;background:#74767e;border-radius:1px"></div>
<svg style="left:592.8px;top:540.2px;" width="18" height="18" viewBox="0 0 18 18"><path d="M5 0.4 H11.2 V5 H5 Z" fill="#33a45c"/><path d="M11.2 0.4 H16.4 Q17.6 0.4 17.6 1.6 V5 H11.2 Z" fill="#5cc878"/><rect x="5" y="5" width="6.2" height="4.4" fill="#1f8a48"/><rect x="11.2" y="5" width="6.4" height="4.4" fill="#33a45c"/><rect x="5" y="9.4" width="12.6" height="4.2" fill="#1b7a3e"/><path d="M5 13.6 H17.6 V16.4 Q17.6 17.6 16.4 17.6 H5 Z" fill="#176a36"/><rect x="0.4" y="6.4" width="9.2" height="9.2" rx="1.2" fill="#13703a"/><text x="5" y="13.6" font-family="Liberation Sans,sans-serif" font-weight="bold" font-size="6.6" text-anchor="middle" fill="#fff">X</text></svg>
<div class="abs" style="left:600.8px;top:562.8px;width:4.4px;height:1.8px;background:#74767e;border-radius:1px"></div>
<svg style="left:629.1px;top:539.6px;" width="19" height="19" viewBox="0 0 19 19"><rect x="0.2" y="0.2" width="18.6" height="18.6" rx="2.8" fill="#2c6988"/><path d="M3.6 3.2 Q9.6 4.2 12.2 9.2 Q13.6 12.4 15.6 15.2 M5 8.4 Q5.4 12.6 9.6 14.6 Q12 15.6 14 15.2 M12.6 3.2 L15.6 6.6 M13 5.6 L15.8 4" fill="none" stroke="#a9cbdb" stroke-width="0.9"/></svg>
<div class="abs" style="left:636.8px;top:562.8px;width:4.4px;height:1.8px;background:#74767e;border-radius:1px"></div>
<div class="abs" style="left:659.6px;top:534px;width:29.4px;height:31.4px;background:#eceef5;border-radius:4px"></div>
<svg style="left:665.1px;top:539.7px;" width="19" height="19" viewBox="0 0 19 19"><path d="M1.6 1.8 V10 Q6.4 13.2 11.2 10 V1.8 Z" fill="#e8c23a"/><ellipse cx="6.4" cy="1.9" rx="4.8" ry="1.7" fill="#f8e27a"/><path d="M13.4 0.8 H17.6 V5 M5 18.2 H0.8 V14" fill="none" stroke="#4c9a50" stroke-width="1.5"/><path d="M8.6 9.6 L17.4 18 M17.4 9.6 L8.6 18" stroke="#e8802a" stroke-width="1.7"/><circle cx="8.8" cy="9.8" r="1.5" fill="#e8802a"/></svg>
<div class="abs" style="left:668.4px;top:562.4px;width:11.8px;height:2.6px;background:#2a7acc;border-radius:1.3px"></div>
<svg style="left:746.5px;top:546.0px;" width="10" height="6" viewBox="0 0 10 6"><path d="M0.8 5.2 L5 1 L9.2 5.2" fill="none" stroke="#2e2e2e" stroke-width="1.4"/></svg>
<svg style="left:769.5px;top:542.0px;" width="14" height="14" viewBox="0 0 14 14"><path d="M1.6 6 A5.4 5.4 0 0 1 11.4 3.6 M12.4 8 A5.4 5.4 0 0 1 2.6 10.4" fill="none" stroke="#55575e" stroke-width="1.1"/><path d="M11.8 0.8 V3.9 H8.7 M2.2 13.2 V10.1 H5.3" fill="none" stroke="#55575e" stroke-width="1.1"/><circle cx="10.8" cy="10.4" r="3.2" fill="#e99a2c"/></svg>
<svg style="left:795.5px;top:543.2px;" width="15" height="12" viewBox="0 0 15 12"><g transform="translate(1 1) scale(0.87)"><path d="M4 10.2 Q0.8 10.2 0.8 7.4 Q0.8 4.8 3.6 4.6 Q4.4 1.4 7.6 1.4 Q10.6 1.4 11.4 4.4 Q14.2 4.6 14.2 7.4 Q14.2 10.2 11.4 10.2 Z" fill="none" stroke="#3c3d42" stroke-width="1.1"/><path d="M1.6 0.8 L13 11.4" stroke="#3c3d42" stroke-width="1.2"/></g></svg>
<div class="abs" style="left:816.2px;top:533.2px;width:25px;height:32px;background:#1b6cbf;border-radius:3px"></div>
<svg style="left:823.5px;top:542.2px;" width="10" height="14" viewBox="0 0 10 14"><rect x="2.9" y="0.4" width="4.2" height="8" rx="2.1" fill="#e8f2fc"/><path d="M0.9 6 Q0.9 10.4 5 10.4 Q9.1 10.4 9.1 6 M5 10.4 V13.4" fill="none" stroke="#bfe0fa" stroke-width="1"/></svg>
<svg style="left:882.6px;top:544.0px;" width="14" height="10" viewBox="0 0 14 10"><path d="M0.6 3.6 Q7 -2 13.4 3.6 M2.8 5.8 Q7 2.2 11.2 5.8 M5 7.8 Q7 6.2 9 7.8" fill="none" stroke="#3a3b40" stroke-width="1.1"/><circle cx="7" cy="9.2" r="0.9" fill="#3a3b40"/></svg>
<svg style="left:902.2px;top:544.2px;" width="14" height="10" viewBox="0 0 14 10"><path d="M0.8 3.4 H3 L6 0.8 V9.2 L3 6.6 H0.8 Z" fill="none" stroke="#3a3b40" stroke-width="1"/><path d="M7.8 3.2 Q9 5 7.8 6.8 M9.6 1.8 Q11.6 5 9.6 8.2 M11.4 0.6 Q14.2 5 11.4 9.4" fill="none" stroke="#3a3b40" stroke-width="0.9"/></svg>
<svg style="left:921.5px;top:544.7px;" width="17" height="9" viewBox="0 0 17 9"><rect x="0.6" y="0.6" width="14.4" height="7.8" rx="2.2" fill="none" stroke="#4a4b50" stroke-width="1.1"/><rect x="2.2" y="2.2" width="9.2" height="4.6" rx="1" fill="#26272b"/><path d="M16 3 V6" stroke="#4a4b50" stroke-width="1.2"/></svg>
<svg style="left:1002.8px;top:544.0px;" width="11" height="12" viewBox="0 0 11 12"><g transform="translate(0.8 0.6) scale(0.88)"><path d="M1 8.6 Q2.2 7.6 2.2 4.6 Q2.4 1.2 5.2 1.2 Q8 1.2 8.2 4.6 Q8.2 7.6 9.4 8.6 Z" fill="#26272b"/><path d="M3.8 9.8 Q5.2 11.6 6.6 9.8 Z" fill="#26272b"/><text x="7.2" y="4.2" font-family="Liberation Sans,sans-serif" font-weight="bold" font-size="4.6" fill="#26272b">z</text></g></svg>
<svg style="left:26.0px;top:535.7px;" width="12" height="12" viewBox="0 0 12 12"><circle cx="6" cy="6" r="5.8" fill="#c42b2b"/><text x="7.4" y="7.6" font-family="Liberation Sans,sans-serif" font-size="5.6" text-anchor="middle" fill="#f0b0b0">3</text></svg>
<div class="abs" style="left:17px;top:555px;width:16.6px;height:1.8px;background:#6f86b2;border-radius:1px"></div>
<div class="abs" style="left:-10px;top:526px;width:92px;height:38.4px;background:rgba(22,22,26,0.53);border-radius:9px;z-index:10"></div>
<div class="abs" style="left:44.4px;top:543.7px;width:3.3px;height:3.3px;background:#fafafa;border-radius:2px;z-index:11"></div>
<div class="abs" style="left:50.6px;top:543.7px;width:3.3px;height:3.3px;background:#fafafa;border-radius:2px;z-index:11"></div>
<div class="abs" style="left:57.0px;top:543.7px;width:3.3px;height:3.3px;background:#fafafa;border-radius:2px;z-index:11"></div>

<!-- TEXT -->
<div class="t" style="left:-2.8px;top:9.7px;font-size:14.5px;color:#f4f4f4;transform:scaleX(0.985);z-index:11;-webkit-text-stroke:0.3px #f4f4f4;">utomatically per the meeting</div>
<div class="t" style="left:2.2px;top:28.0px;font-size:14.5px;color:#7b80cc;transform:scaleX(0.975);z-index:11;-webkit-text-stroke:0.2px #7b80cc;">Privacy Policy</div>
<div class="t" style="left:277.0px;top:-1.3px;font-size:10px;color:#3a3a44;transform:scaleX(0.927);">e_db (DESKTOP-3CSHNCF\AMIT (61))* - Microsoft SQL Server Management Studio</div>
<div class="t" style="left:287.0px;top:18.0px;font-size:10px;color:#34425f;transform:scaleX(0.972);">Help</div>
<div class="t" style="left:793.0px;top:-4.0px;font-size:10px;color:#a9adb8;transform:scaleX(0.902);">Quick Launch (Ctrl+Q)</div>
<div class="t" style="left:65.0px;top:62.5px;font-size:10px;color:#2a2a2a;transform:scaleX(0.931);">course_db</div>
<div class="t" style="left:220.0px;top:62.5px;font-size:10px;color:#5a6580;transform:scaleX(0.872);">Execute</div>
<div class="t" style="left:10.0px;top:88.2px;font-size:10.2px;color:#e9edf6;transform:scaleX(0.926);">Object Explorer</div>
<div class="t" style="left:12.5px;top:108.7px;font-size:10.2px;color:#34425f;transform:scaleX(0.896);">Connect</div>
<div class="t" style="left:51.0px;top:126.5px;font-size:10px;color:#30333b;transform:scaleX(0.951);">Company4</div>
<div class="t" style="left:51.0px;top:141.5px;font-size:10px;color:#30333b;transform:scaleX(0.935);">CompanyDB</div>
<div class="t" style="left:51.0px;top:156.5px;font-size:10px;color:#30333b;transform:scaleX(0.934);">CompanyDB_g9</div>
<div class="t" style="left:51.0px;top:171.5px;font-size:10px;color:#30333b;transform:scaleX(0.931);">CompanyDB2</div>
<div class="t" style="left:51.0px;top:186.5px;font-size:10px;color:#30333b;transform:scaleX(0.931);">CompanyDB3</div>
<div class="t" style="left:51.0px;top:201.5px;font-size:10px;color:#30333b;transform:scaleX(0.959);">CompanyDBg9</div>
<div class="t" style="left:51.0px;top:216.5px;font-size:10px;color:#30333b;transform:scaleX(0.921);">course_db</div>
<div class="t" style="left:61.0px;top:231.5px;font-size:10px;color:#30333b;transform:scaleX(0.939);">Database Diagrams</div>
<div class="t" style="left:61.0px;top:246.5px;font-size:10px;color:#30333b;transform:scaleX(0.917);">Tables</div>
<div class="t" style="left:71.0px;top:261.5px;font-size:10px;color:#30333b;transform:scaleX(0.941);">System Tables</div>
<div class="t" style="left:71.0px;top:276.5px;font-size:10px;color:#30333b;transform:scaleX(0.910);">FileTables</div>
<div class="t" style="left:71.0px;top:291.5px;font-size:10px;color:#30333b;transform:scaleX(0.909);">External Tables</div>
<div class="t" style="left:71.0px;top:306.5px;font-size:10px;color:#30333b;transform:scaleX(0.928);">Graph Tables</div>
<div class="t" style="left:71.0px;top:321.5px;font-size:10px;color:#30333b;transform:scaleX(0.983);">dbo.Instructors</div>
<div class="t" style="left:71.0px;top:336.5px;font-size:10px;color:#30333b;transform:scaleX(0.976);">dbo.Student_group</div>
<div class="t" style="left:71.0px;top:351.5px;font-size:10px;color:#30333b;transform:scaleX(0.978);">dbo.students</div>
<div class="t" style="left:81.5px;top:366.5px;font-size:10px;color:#30333b;transform:scaleX(0.950);">Columns</div>
<div class="t" style="left:92.0px;top:382.0px;font-size:10px;color:#30333b;transform:scaleX(0.937);">student_id (PK, int, not r</div>
<div class="t" style="left:92.0px;top:397.0px;font-size:10px;color:#30333b;transform:scaleX(0.932);">name (varchar(100), not</div>
<div class="t" style="left:92.0px;top:412.0px;font-size:10px;color:#30333b;transform:scaleX(0.909);">email (varchar(100), null)</div>
<div class="t" style="left:92.0px;top:427.0px;font-size:10px;color:#30333b;transform:scaleX(0.933);">phone (char(11), null)</div>
<div class="t" style="left:92.0px;top:442.0px;font-size:10px;color:#30333b;transform:scaleX(0.936);">birth_date (date, null)</div>
<div class="t" style="left:92.0px;top:457.0px;font-size:10px;color:#30333b;transform:scaleX(0.928);">registration_date (date, </div>
<div class="t" style="left:92.0px;top:472.0px;font-size:10px;color:#30333b;transform:scaleX(0.925);">group_id (FK, int, null)</div>
<div class="t" style="left:217.0px;top:86.8px;font-size:10px;color:#2a2a20;transform:scaleX(0.917);">SQLQuery1.sql - D...CSHNCF\AMIT (61))*</div>
<div class="t" style="left:216.7px;top:360.9px;font-size:9.6px;color:#222;transform:scaleX(0.937);">144 %</div>
<div class="t" style="left:231.0px;top:376.3px;font-size:9.4px;color:#222;transform:scaleX(0.912);">Results</div>
<div class="t" style="left:278.0px;top:376.3px;font-size:9.4px;color:#222;transform:scaleX(0.913);">Messages</div>
<div class="t" style="left:245.0px;top:391.8px;font-size:9.4px;color:#2a2a2a;transform:scaleX(0.950);">Instructor_Id</div>
<div class="t" style="left:305.4px;top:391.8px;font-size:9.4px;color:#2a2a2a;transform:scaleX(0.844);">name</div>
<div class="t" style="left:371.5px;top:391.8px;font-size:9.4px;color:#2a2a2a;transform:scaleX(0.861);">email</div>
<div class="t" style="left:454.3px;top:391.8px;font-size:9.4px;color:#2a2a2a;transform:scaleX(0.897);">phone</div>
<div class="t" style="left:488.4px;top:391.8px;font-size:9.4px;color:#2a2a2a;transform:scaleX(0.910);">hire_Date</div>
<div class="t" style="left:541.7px;top:391.8px;font-size:9.4px;color:#2a2a2a;transform:scaleX(0.884);">Salary</div>
<div class="t" style="left:221.0px;top:405.3px;font-size:9.4px;color:#2a2a2a;">1</div>
<div class="t" style="left:246.3px;top:405.3px;font-size:9.4px;color:#2a2a2a;">1</div>
<div class="t" style="left:305.4px;top:405.3px;font-size:9.4px;color:#2a2a2a;transform:scaleX(0.918);">Ahmed hassan</div>
<div class="t" style="left:372.3px;top:405.3px;font-size:9.4px;color:#2a2a2a;transform:scaleX(0.897);">ahmed@email.com</div>
<div class="t" style="left:455.0px;top:405.3px;font-size:9.4px;color:#2a2a2a;transform:scaleX(0.918);">NULL</div>
<div class="t" style="left:489.0px;top:405.3px;font-size:9.4px;color:#2a2a2a;transform:scaleX(0.896);">2022-03-01</div>
<div class="t" style="left:542.5px;top:405.3px;font-size:9.4px;color:#2a2a2a;transform:scaleX(0.929);">7000.00</div>
<div class="t" style="left:221.0px;top:418.4px;font-size:9.4px;color:#2a2a2a;">2</div>
<div class="t" style="left:246.3px;top:418.4px;font-size:9.4px;color:#2a2a2a;">2</div>
<div class="t" style="left:305.4px;top:418.4px;font-size:9.4px;color:#2a2a2a;transform:scaleX(0.899);">Sara ali</div>
<div class="t" style="left:372.3px;top:418.4px;font-size:9.4px;color:#2a2a2a;transform:scaleX(0.901);">sara@email.com</div>
<div class="t" style="left:455.0px;top:418.4px;font-size:9.4px;color:#2a2a2a;transform:scaleX(0.918);">NULL</div>
<div class="t" style="left:489.0px;top:418.4px;font-size:9.4px;color:#2a2a2a;transform:scaleX(0.896);">2022-03-15</div>
<div class="t" style="left:542.5px;top:418.4px;font-size:9.4px;color:#2a2a2a;transform:scaleX(0.929);">8000.00</div>
<div class="t" style="left:221.0px;top:431.5px;font-size:9.4px;color:#2a2a2a;">3</div>
<div class="t" style="left:246.3px;top:431.5px;font-size:9.4px;color:#2a2a2a;">3</div>
<div class="t" style="left:305.4px;top:431.5px;font-size:9.4px;color:#2a2a2a;transform:scaleX(0.850);">Omar Khalid</div>
<div class="t" style="left:372.3px;top:431.5px;font-size:9.4px;color:#2a2a2a;transform:scaleX(0.893);">omar@email.com</div>
<div class="t" style="left:455.0px;top:431.5px;font-size:9.4px;color:#2a2a2a;transform:scaleX(0.918);">NULL</div>
<div class="t" style="left:489.0px;top:431.5px;font-size:9.4px;color:#2a2a2a;transform:scaleX(0.896);">2022-05-10</div>
<div class="t" style="left:542.5px;top:431.5px;font-size:9.4px;color:#2a2a2a;transform:scaleX(0.929);">7000.00</div>
<div class="t" style="left:227.5px;top:491.5px;font-size:9.8px;color:#45431f;transform:scaleX(0.947);">Query executed successfully.</div>
<div class="t" style="left:581.5px;top:491.6px;font-size:9.6px;color:#45431f;transform:scaleX(0.878);">DESKTOP-3CSHNCF\SQLEXPRESS ...</div>
<div class="t" style="left:743.5px;top:491.6px;font-size:9.6px;color:#45431f;transform:scaleX(0.926);">DESKTOP-3CSHNCF\AMIT (61)</div>
<div class="t" style="left:882.0px;top:491.6px;font-size:9.6px;color:#45431f;transform:scaleX(0.960);">course_db</div>
<div class="t" style="left:935.4px;top:491.6px;font-size:9.6px;color:#45431f;transform:scaleX(0.980);">00:00:00</div>
<div class="t" style="left:981.4px;top:491.6px;font-size:9.6px;color:#45431f;transform:scaleX(1.012);">3 rows</div>
<div class="t" style="left:23.3px;top:515.7px;font-size:10px;color:#d4efff;transform:scaleX(0.886);">Ready</div>
<div class="t" style="left:420.0px;top:515.3px;font-size:10px;color:#d4efff;transform:scaleX(0.879);">Ln 70</div>
<div class="t" style="left:493.0px;top:515.3px;font-size:10px;color:#d4efff;transform:scaleX(0.890);">Col 1</div>
<div class="t" style="left:567.0px;top:515.3px;font-size:10px;color:#d4efff;transform:scaleX(0.880);">Ch 1</div>
<div class="t" style="left:677.0px;top:515.3px;font-size:10px;color:#d4efff;transform:scaleX(0.864);">INS</div>
<div class="t" style="left:-5.5px;top:536.9px;font-size:16.5px;color:#f6f6f6;z-index:11;letter-spacing:-0.4px;">smail</div>
<div class="t" style="left:849.7px;top:544.4px;font-size:9.6px;color:#333;transform:scaleX(0.890);">ENG</div>
<div class="t" style="left:961.3px;top:537.3px;font-size:9.6px;color:#3a3a3c;transform:scaleX(0.960);">9:54 PM</div>
<div class="t" style="left:951.7px;top:550.3px;font-size:9.6px;color:#3a3a3c;transform:scaleX(1.031);">2/12/2026</div>
</body>
</html>
